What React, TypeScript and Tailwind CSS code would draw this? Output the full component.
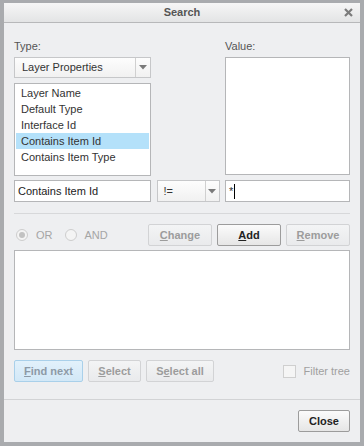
import type { ReactNode } from "react"

const font = { fontFamily: '"Liberation Sans", Arial, sans-serif' }

function Arrow() {
  return (
    <svg width="8" height="5" viewBox="0 0 8 5">
      <path d="M0 0 H8 L4 4.5 Z" fill="#7a7a7a" />
    </svg>
  )
}

function Btn({
  children,
  width,
  variant = "disabled",
}: {
  children: ReactNode
  width: string
  variant?: "disabled" | "default" | "primary"
}) {
  const styles = {
    disabled: "border-[#d2d3d5] bg-gradient-to-b from-[#f3f4f5] to-[#e9eaec] text-[#9c9c9c]",
    default: "border-[#9c9c9c] bg-gradient-to-b from-[#fbfbfb] to-[#e6e6e6] text-[#222]",
    primary: "border-[#a9d0ea] bg-gradient-to-b from-[#e2f1fb] to-[#d2e8f7] text-[#8d9aa6]",
  }[variant]
  return (
    <div
      className={`${width} h-[22px] flex items-center justify-center rounded-[2px] border text-[11px] font-bold ${styles}`}
    >
      {children}
    </div>
  )
}

function Radio({ checked, label }: { checked?: boolean; label: string }) {
  return (
    <div className="flex items-center gap-[8px]">
      <div className="w-[12px] h-[12px] rounded-full border border-[#cdcdcd] bg-[#f4f4f4] flex items-center justify-center">
        {checked && <div className="w-[6px] h-[6px] rounded-full bg-[#c2c2c2]" />}
      </div>
      <span className="text-[11px] text-[#a5a5a5]">{label}</span>
    </div>
  )
}

const items = ["Layer Name", "Default Type", "Interface Id", "Contains Item Id", "Contains Item Type"]

export default function App() {
  return (
    <div
      className="w-[364px] h-[446px] bg-[#a9abae] pt-[3px] px-[4px] pb-[4px] flex flex-col"
      style={font}
    >
      {/* title bar */}
      <div className="h-[20px] shrink-0 relative flex items-center justify-center bg-gradient-to-b from-[#f6f6f6] to-[#e3e4e5] border-b border-[#b7b8ba]">
        <span className="text-[11px] font-bold text-[#555]">Search</span>
        <svg className="absolute right-[7px] top-[5px]" width="9" height="9" viewBox="0 0 9 9">
          <path d="M1 1 L8 8 M8 1 L1 8" stroke="#7b7b7b" strokeWidth="2.2" />
        </svg>
      </div>

      <div className="flex-1 bg-[#eeeff1] flex flex-col">
        <div className="px-[10px] flex flex-col">
          {/* type / value */}
          <div className="mt-[16px] flex justify-between items-start">
            <div className="w-[137px] flex flex-col">
              <span className="text-[11px] leading-[14px] text-[#555]">Type:</span>
              <div className="mt-[4px] h-[21px] flex border border-[#c6c7c9] bg-gradient-to-b from-[#fdfdfd] to-[#f1f1f1]">
                <span className="flex-1 pl-[7px] flex items-center text-[11px] text-[#333]">
                  Layer Properties
                </span>
                <div className="w-[15px] border-l border-[#d0d0d0] flex items-center justify-center">
                  <Arrow />
                </div>
              </div>
              <div className="mt-[5px] h-[93px] border border-[#b5b6b8] bg-white px-[1px] pt-[1px]">
                {items.map((it) => (
                  <div
                    key={it}
                    className={`h-[16px] pl-[5px] flex items-center text-[11px] text-[#333] ${
                      it === "Contains Item Id" ? "bg-[#b4e1fa]" : ""
                    }`}
                  >
                    {it}
                  </div>
                ))}
              </div>
            </div>
            <div className="w-[125px] flex flex-col">
              <span className="text-[11px] leading-[14px] text-[#555]">Value:</span>
              <div className="mt-[4px] h-[118px] border border-[#b5b6b8] bg-white" />
            </div>
          </div>

          {/* condition row */}
          <div className="mt-[4px] h-[22px] flex justify-between">
            <div className="w-[137px] border border-[#b5b6b8] bg-white pl-[3px] flex items-center text-[11px] text-[#222]">
              Contains Item Id
            </div>
            <div className="w-[63px] flex border border-[#c6c7c9] bg-gradient-to-b from-[#fdfdfd] to-[#f1f1f1]">
              <span className="flex-1 pl-[6px] flex items-center text-[11px] text-[#333]">!=</span>
              <div className="w-[14px] border-l border-[#d0d0d0] flex items-center justify-center">
                <Arrow />
              </div>
            </div>
            <div className="w-[125px] border border-[#b5b6b8] bg-white pl-[3px] flex items-center text-[11px] text-[#333]">
              <span>*</span>
              <span className="ml-[1px] w-[1px] h-[15px] bg-black" />
            </div>
          </div>

          <div className="mt-[11px] h-[1px] bg-[#d7d8da]" />

          {/* operator row */}
          <div className="mt-[10px] h-[22px] flex items-center justify-between">
            <div className="flex items-center gap-[12px] pl-[2px]">
              <Radio checked label="OR" />
              <Radio label="AND" />
            </div>
            <div className="flex gap-[5px]">
              <Btn width="w-[64px]">
                <span className="underline">C</span>hange
              </Btn>
              <Btn width="w-[64px]" variant="default">
                <span className="underline">A</span>dd
              </Btn>
              <Btn width="w-[64px]">
                <span className="underline">R</span>emove
              </Btn>
            </div>
          </div>

          <div className="mt-[4px] h-[100px] border border-[#b5b6b8] bg-white" />

          {/* find row */}
          <div className="mt-[10px] h-[22px] flex items-center justify-between">
            <div className="flex gap-[5px]">
              <Btn width="w-[69px]" variant="primary">
                <span className="underline">F</span>ind next
              </Btn>
              <Btn width="w-[53px]">
                <span className="underline">S</span>elect
              </Btn>
              <Btn width="w-[68px]">
                S<span className="underline">e</span>lect all
              </Btn>
            </div>
            <div className="flex items-center gap-[8px]">
              <div className="w-[13px] h-[13px] border border-[#cfcfcf] bg-[#f5f5f5]" />
              <span className="text-[11px] text-[#a0a0a0]">Filter tree</span>
            </div>
          </div>
        </div>

        <div className="mt-[17px] h-[1px] bg-[#d2d3d5]" />

        <div className="px-[10px] pt-[10px] flex justify-end">
          <Btn width="w-[52px]" variant="default">
            Close
          </Btn>
        </div>
      </div>
    </div>
  )
}
